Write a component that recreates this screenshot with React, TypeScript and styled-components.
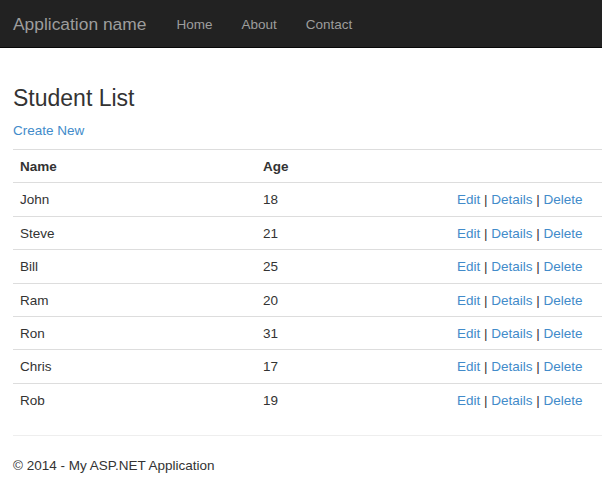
import styled, { createGlobalStyle } from "styled-components";

const GlobalStyle = createGlobalStyle`
  html, body {
    margin: 0;
    padding: 0;
    background: #fff;
  }
  body {
    font-family: "Liberation Sans", Arial, sans-serif;
    font-size: 13.5px;
    line-height: 19px;
    color: #333;
  }
`;

interface Student {
  name: string;
  age: number;
}

const students: Student[] = [
  { name: "John", age: 18 },
  { name: "Steve", age: 21 },
  { name: "Bill", age: 25 },
  { name: "Ram", age: 20 },
  { name: "Ron", age: 31 },
  { name: "Chris", age: 17 },
  { name: "Rob", age: 19 },
];

const App = () => {
  return (
    <>
      <GlobalStyle />
      <Navbar>
        <Brand href="#">Application name</Brand>
        <NavLinks>
          <NavLink href="#">Home</NavLink>
          <NavLink href="#">About</NavLink>
          <NavLink href="#">Contact</NavLink>
        </NavLinks>
      </Navbar>

      <Container>
        <Title>Student List</Title>
        <CreateLine>
          <Link href="#">Create New</Link>
        </CreateLine>

        <Table>
          <colgroup>
            <col style={{ width: 243 }} />
            <col style={{ width: 194 }} />
            <col />
          </colgroup>
          <thead>
            <tr>
              <Th>Name</Th>
              <Th>Age</Th>
              <Th></Th>
            </tr>
          </thead>
          <tbody>
            {students.map((s) => (
              <tr key={s.name}>
                <Td>{s.name}</Td>
                <Td>{s.age}</Td>
                <Td>
                  <Link href="#">Edit</Link> | <Link href="#">Details</Link> |{" "}
                  <Link href="#">Delete</Link>
                </Td>
              </tr>
            ))}
          </tbody>
        </Table>

        <Rule />
        <Footer>© 2014 - My ASP.NET Application</Footer>
      </Container>
    </>
  );
};

export default App;

const Navbar = styled.nav`
  height: 45px;
  padding: 2px 0 0 13px;
  display: flex;
  align-items: center;
  background-color: #222;
  border-bottom: 1px solid #080808;
`;

const Brand = styled.a`
  font-size: 17.4px;
  color: #9d9d9d;
  text-decoration: none;
  margin-right: 30px;
`;

const NavLinks = styled.div`
  display: flex;
  gap: 29px;
`;

const NavLink = styled.a`
  font-size: 13.5px;
  color: #9d9d9d;
  text-decoration: none;
`;

const Container = styled.div`
  padding-left: 13px;
`;

const Title = styled.h2`
  margin: 38px 0 0 0;
  font-size: 23px;
  line-height: 25px;
  font-weight: 500;
  color: #333;
`;

const CreateLine = styled.p`
  margin: 10px 0 0 0;
`;

const Link = styled.a`
  color: #428bca;
  text-decoration: none;
`;

const Table = styled.table`
  width: 100%;
  margin-top: 9px;
  border-collapse: collapse;
  border-spacing: 0;
  table-layout: fixed;
`;

const Th = styled.th`
  padding: 8px 7px 6px;
  line-height: 18.4px;
  text-align: left;
  font-weight: bold;
  border-top: 1px solid #ddd;
`;

const Td = styled.td`
  padding: 8px 7px 6px;
  line-height: 18.4px;
  text-align: left;
  border-top: 1px solid #ddd;
  white-space: nowrap;
`;

const Rule = styled.hr`
  margin: 19px 0 0 0;
  border: 0;
  border-top: 1px solid #eee;
`;

const Footer = styled.footer`
  margin-top: 20px;
`;
